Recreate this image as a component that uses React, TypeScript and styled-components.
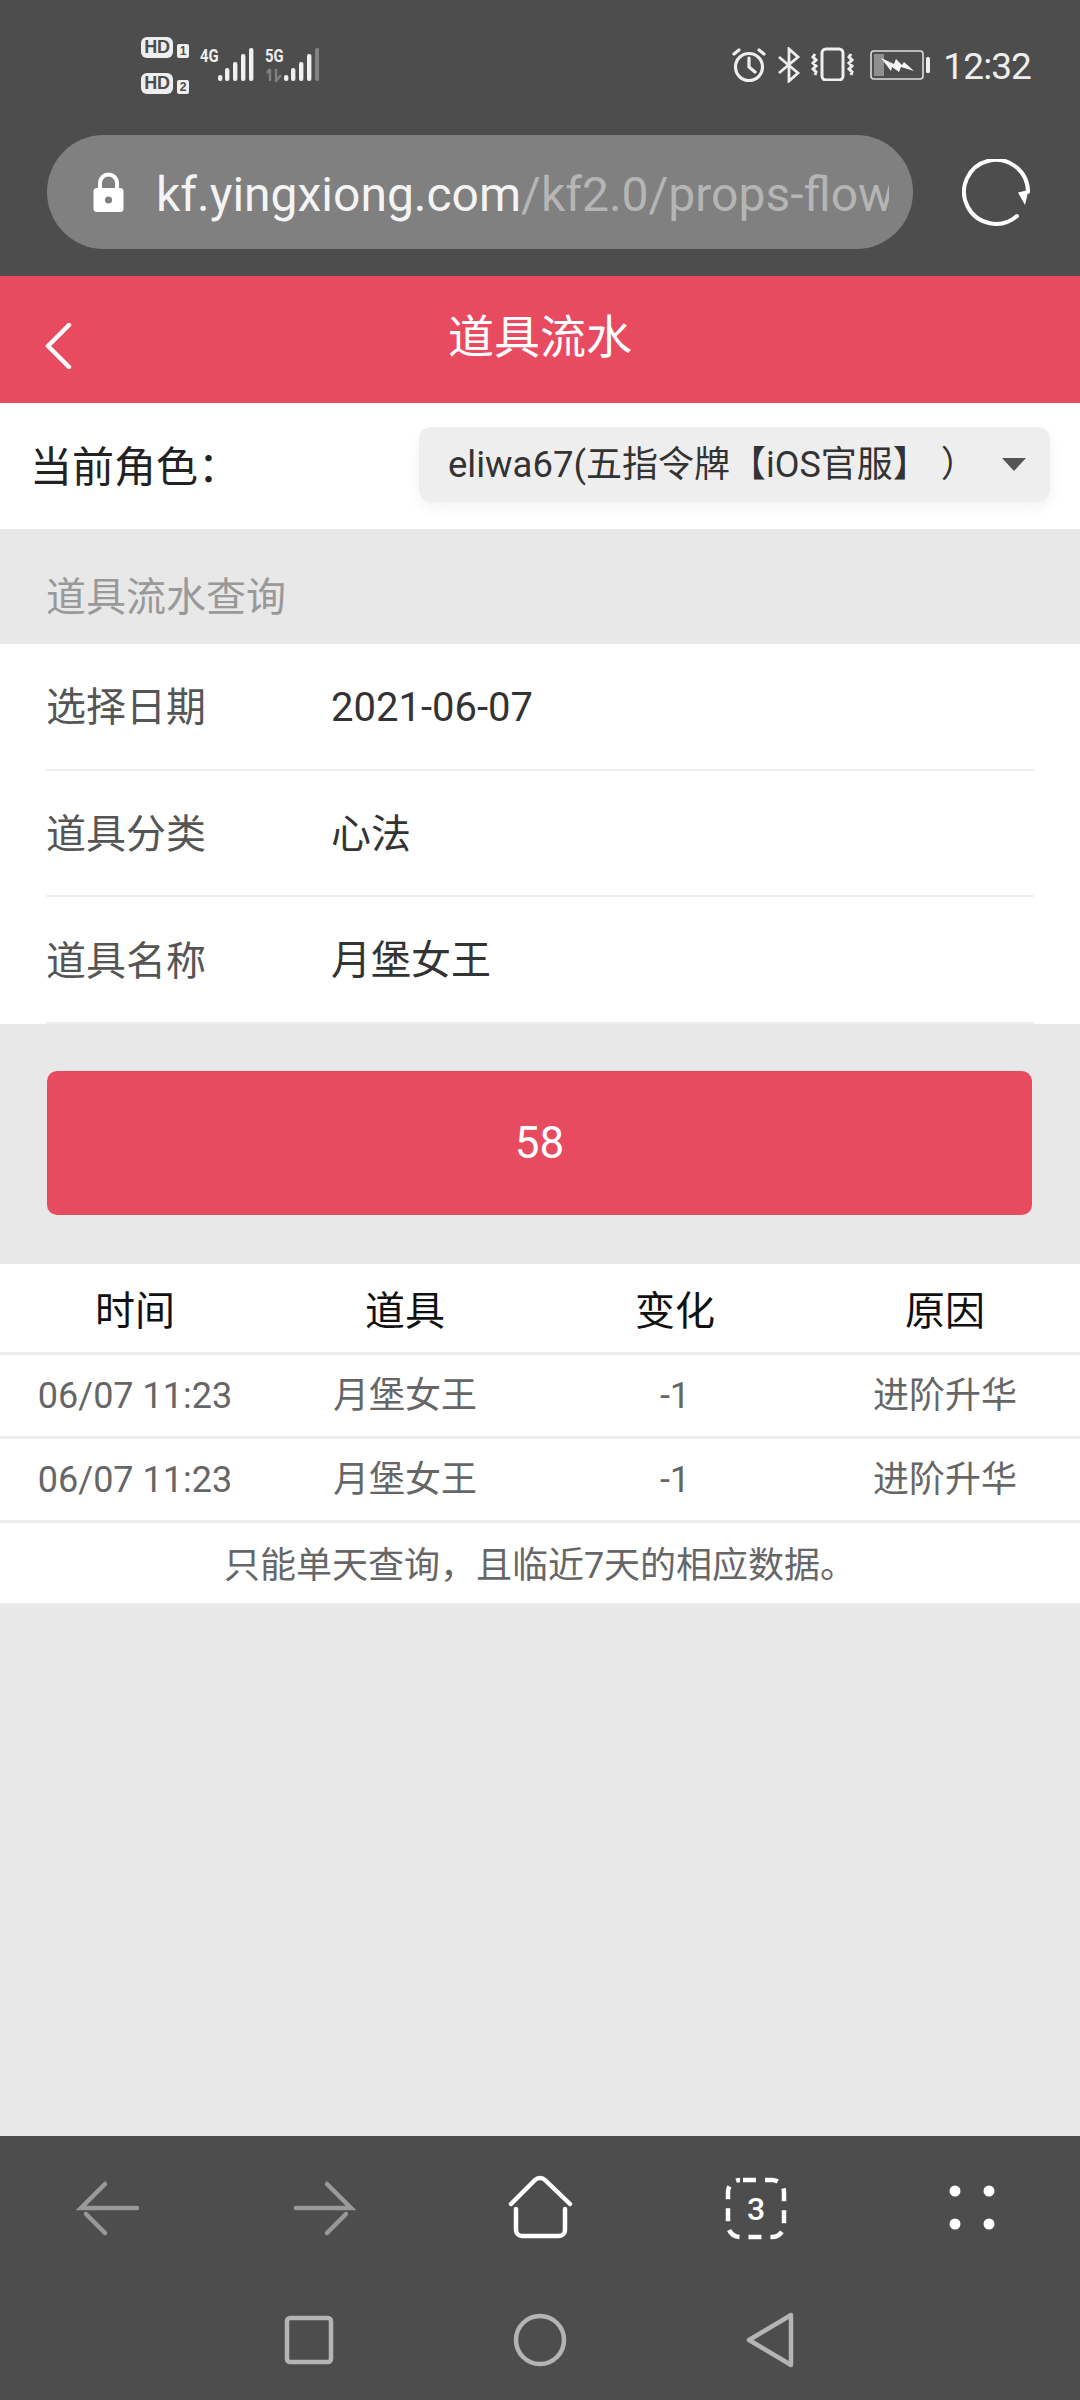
import React from "react";
import styled, { createGlobalStyle } from "styled-components";

const Global = createGlobalStyle`
  html, body { margin: 0; padding: 0; background: #e8e8e8; }
  * { box-sizing: border-box; }
  body { font-family: Roboto, "Noto Sans CJK SC", sans-serif; }
`;

const Page = styled.div`
  width: 1080px;
  height: 2400px;
  display: flex;
  flex-direction: column;
  background: #e8e8e8;
  overflow: hidden;
`;

const Chrome = styled.header`
  height: 276px;
  flex: none;
  background: #4d4d4d;
  display: flex;
  flex-direction: column;
`;

const StatusBar = styled.div`
  height: 135px;
  flex: none;
  padding: 0 49px 0 141px;
  display: flex;
  justify-content: space-between;
`;

const StatusLeft = styled.div`
  display: flex;
  padding-top: 37px;
`;

const SimStack = styled.div`
  width: 49px;
  display: flex;
  flex-direction: column;
  gap: 15px;
`;

const SimRow = styled.div`
  height: 21px;
  display: flex;
  align-items: flex-end;
  gap: 4px;
`;

const HdBadge = styled.span`
  width: 32px;
  height: 21px;
  border-radius: 6px;
  background: #eeeeee;
  color: #4d4d4d;
  font: 700 18px/21px "Liberation Sans", sans-serif;
  text-align: center;
  letter-spacing: -0.3px;
`;

const SimIndex = styled.span`
  width: 12px;
  height: 14px;
  border-radius: 2px;
  background: #eeeeee;
  color: #4d4d4d;
  font: 700 12px/14px "Liberation Sans", sans-serif;
  text-align: center;
`;

const SignalGroup = styled.div<{ $gap: number }>`
  margin-left: ${(p) => p.$gap}px;
  width: 53px;
  height: 34px;
  margin-top: 11px;
  position: relative;
`;

const NetLabel = styled.span`
  position: absolute;
  left: 0;
  top: -2px;
  color: #eeeeee;
  font: 700 19px/20px Roboto, sans-serif;
  transform: scaleX(0.78);
  transform-origin: left top;
`;

const StatusRight = styled.div`
  display: flex;
  align-items: flex-start;
  padding-top: 47px;
`;

const Clock = styled.span`
  margin-left: 13px;
  margin-top: 1px;
  color: #eeeeee;
  font: 400 37px/38px Roboto, sans-serif;
  letter-spacing: -0.9px;
`;

const UrlRow = styled.div`
  padding-left: 47px;
  display: flex;
  align-items: flex-start;
`;

const UrlPill = styled.div`
  width: 866px;
  height: 114px;
  border-radius: 57px;
  background: #808080;
  display: flex;
  align-items: center;
  padding: 0 24px 0 46px;
`;

const UrlText = styled.div`
  margin-left: 32px;
  padding-top: 5px;
  flex: 1;
  min-width: 0;
  overflow: hidden;
  white-space: nowrap;
  font: 400 48px/60px Roboto, sans-serif;
  color: #b5b5b5;
`;

const UrlHost = styled.span`
  color: #f4f4f4;
`;

const Reload = styled.svg`
  margin: 24px 0 0 49px;
  flex: none;
`;

const TitleBar = styled.div`
  height: 127px;
  flex: none;
  background: #e84b5f;
  display: grid;
  grid-template-columns: 1fr auto 1fr;
  align-items: center;
`;

const BackIcon = styled.svg`
  margin: 13px 0 0 44px;
`;

const Title = styled.h1`
  margin: 0 0 13px;
  color: #fff;
  font: 400 46px/60px "Noto Sans CJK SC", sans-serif;
`;

const RoleBar = styled.div`
  height: 126px;
  flex: none;
  background: #fff;
  display: flex;
  align-items: center;
  justify-content: space-between;
  padding: 0 30px 0 30px;
`;

const RoleLabel = styled.span`
  font: 400 42px/56px "Noto Sans CJK SC", sans-serif;
  color: #222;
  margin-top: -4px;
`;

const RoleSelect = styled.div`
  width: 631px;
  height: 75px;
  margin-top: -3px;
  border-radius: 12px;
  background: #eeeeee;
  box-shadow: 0 6px 14px rgba(0, 0, 0, 0.05);
  display: flex;
  align-items: center;
  justify-content: space-between;
  padding: 0 24px 0 29px;
  font: 400 36px/48px Roboto, "Noto Sans CJK SC", sans-serif;
  color: #333;
  white-space: nowrap;
  text-spacing-trim: space-all;
`;

const RoleName = styled.span`
  font-size: 36.5px;
`;

const RoleParen = styled.span`
  margin-left: 12px;
`;

const Caret = styled.span`
  width: 0;
  height: 0;
  border-left: 12px solid transparent;
  border-right: 12px solid transparent;
  border-top: 13px solid #555;
`;

const SectionTitle = styled.div`
  height: 115px;
  flex: none;
  padding: 15px 0 0 46px;
  display: flex;
  align-items: center;
  font: 400 40px/50px "Noto Sans CJK SC", sans-serif;
  color: #999;
`;

const Form = styled.div`
  height: 380px;
  flex: none;
  background: #fff;
  padding: 0 46px;
  display: flex;
  flex-direction: column;
`;

const FormRow = styled.div`
  flex: 1;
  display: flex;
  align-items: center;
  border-bottom: 2px solid #eeeeee;
`;

const FormLabel = styled.span`
  width: 285px;
  padding-bottom: 4px;
  font: 400 40px/50px "Noto Sans CJK SC", sans-serif;
  color: #555;
`;

const FormValue = styled.span`
  padding-top: 3px;
  font: 400 40px/50px Roboto, "Noto Sans CJK SC", sans-serif;
  color: #333;
`;

const ButtonArea = styled.div`
  height: 240px;
  flex: none;
  padding: 47px 48px 49px 47px;
`;

const SubmitButton = styled.button`
  width: 100%;
  height: 144px;
  border: 0;
  padding: 0;
  border-radius: 10px;
  background: #e84b5f;
  color: #fff;
  font: 400 44px/50px Roboto, sans-serif;
`;

const Table = styled.div`
  flex: none;
  background: #fff;
`;

const TableRow = styled.div<{ $height: number }>`
  height: ${(p) => p.$height}px;
  display: grid;
  grid-template-columns: repeat(4, 270px);
  align-items: center;
  border-bottom: 3px solid #ececec;
  text-align: center;
`;

const HeadCell = styled.div`
  font: 400 40px/50px "Noto Sans CJK SC", sans-serif;
  color: #111;
`;

const Cell = styled.div`
  font: 400 36px/46px Roboto, "Noto Sans CJK SC", sans-serif;
  color: #666;
`;

const Note = styled.div`
  height: 83px;
  padding-top: 6px;
  display: flex;
  align-items: center;
  justify-content: center;
  border-bottom: 3px solid #ececec;
  font: 400 36px/46px Roboto, "Noto Sans CJK SC", sans-serif;
  color: #666;
`;

const Spacer = styled.div`
  flex: 1;
`;

const BottomBar = styled.footer`
  height: 264px;
  flex: none;
  background: #4d4d4d;
  display: flex;
  flex-direction: column;
`;

const ToolRow = styled.div`
  display: grid;
  grid-template-columns: repeat(5, 216px);
  justify-items: center;
  padding-top: 36px;
`;

const SysRow = styled.div`
  margin-top: 67px;
  display: grid;
  grid-template-columns: repeat(3, 231px);
  justify-content: center;
  justify-items: center;
`;

const Tool = styled.svg`
  display: block;
`;

const TabsCount = styled.text`
  font: 500 32px Roboto, sans-serif;
  fill: #fff;
`;

const barSpec = [
  [18, 27],
  [25, 20],
  [33, 14],
  [41, 6],
  [49, 0],
];

const Bars = ({ dim }: { dim?: boolean }) => (
  <svg width="54" height="34" viewBox="0 0 54 34" style={{ position: "absolute", left: 0, top: 0 }}>
    {barSpec.map(([x, y], i) => (
      <rect key={i} x={x + (dim ? 1 : 0)} y={y} width="4.4" height={33 - y} rx="2" fill={dim && i === 4 ? "#828282" : "#f0f0f0"} />
    ))}
    {dim ? (
      <path d="M5 33V21M2 25l3-4M11 21v12l5-6" stroke="#808080" strokeWidth="2.4" fill="none" />
    ) : null}
  </svg>
);

export default function App() {
  return (
    <Page>
      <Global />
      <Chrome>
        <StatusBar>
          <StatusLeft>
            <SimStack>
              <SimRow>
                <HdBadge>HD</HdBadge>
                <SimIndex>1</SimIndex>
              </SimRow>
              <SimRow>
                <HdBadge>HD</HdBadge>
                <SimIndex>2</SimIndex>
              </SimRow>
            </SimStack>
            <SignalGroup $gap={10}>
              <NetLabel>4G</NetLabel>
              <Bars />
            </SignalGroup>
            <SignalGroup $gap={12}>
              <NetLabel>5G</NetLabel>
              <Bars dim />
            </SignalGroup>
          </StatusLeft>
          <StatusRight>
            <svg width="34" height="36" viewBox="0 0 34 36" fill="none" stroke="#eee" strokeWidth="3.2" strokeLinecap="round">
              <circle cx="17" cy="20" r="13.5" />
              <path d="M17 11v9l6 5M2 7l5-4M32 7l-5-4" />
            </svg>
            <svg width="24" height="36" viewBox="0 0 24 36" fill="none" stroke="#eee" strokeWidth="2.8" style={{ marginLeft: 11 }}>
              <path d="M2 10l19 16-9 8V2l9 8L2 26" />
            </svg>
            <svg width="44" height="34" viewBox="0 0 44 34" fill="none" stroke="#eee" strokeWidth="3" style={{ marginLeft: 10 }}>
              <rect x="11" y="2" width="21" height="31" rx="4" />
              <path d="M4 7L2 10l3 3-3 3 3 3-3 3 3 3-1 3M40 7l-2 3 3 3-3 3 3 3-3 3 3 3-1 3" />
            </svg>
            <svg width="60" height="30" viewBox="0 0 60 30" style={{ marginLeft: 15, marginTop: 3 }}>
              <rect x="1" y="1" width="52" height="28" rx="3" fill="none" stroke="#ddd" strokeWidth="1.6" />
              <rect x="4" y="4" width="10" height="22" fill="#8f8f8f" />
              <rect x="56" y="7" width="4" height="16" rx="1.5" fill="#eee" />
              <path d="M11 8l13 6 2-5 6 6 2-3 10 9-13-4-2 5-7-5-1 4z" fill="#f6f6f6" />
            </svg>
            <Clock>12:32</Clock>
          </StatusRight>
        </StatusBar>
        <UrlRow>
          <UrlPill>
            <svg width="31" height="40" viewBox="0 0 31 40">
              <path d="M7 18v-7a8.5 8.5 0 0 1 17 0v7" fill="none" stroke="#fff" strokeWidth="4" />
              <rect x="0.5" y="16" width="30" height="24" rx="3.5" fill="#fff" />
              <circle cx="15.5" cy="28" r="3.6" fill="#808080" />
            </svg>
            <UrlText>
              <UrlHost>kf.yingxiong.com</UrlHost>/kf2.0/props-flow
            </UrlText>
          </UrlPill>
          <Reload width="68" height="68" viewBox="0 0 68 68" fill="none">
            <path d="M55 57A32 32 0 1 1 66 33" stroke="#fff" strokeWidth="4" strokeLinecap="round" />
            <path d="M56 33.5l10.5-2.5L63 46z" fill="#fff" />
          </Reload>
        </UrlRow>
      </Chrome>

      <TitleBar>
        <BackIcon width="30" height="46" viewBox="0 0 30 46" fill="none">
          <path d="M25 2L4 23l21 21" stroke="#fff" strokeWidth="4.5" strokeLinecap="round" strokeLinejoin="round" />
        </BackIcon>
        <Title>道具流水</Title>
        <span />
      </TitleBar>

      <RoleBar>
        <RoleLabel>当前角色：</RoleLabel>
        <RoleSelect>
          <span>
            <RoleName>eliwa67(</RoleName>五指令牌【iOS官服】<RoleParen>）</RoleParen>
          </span>
          <Caret />
        </RoleSelect>
      </RoleBar>

      <SectionTitle>道具流水查询</SectionTitle>

      <Form>
        <FormRow>
          <FormLabel>选择日期</FormLabel>
          <FormValue>2021-06-07</FormValue>
        </FormRow>
        <FormRow>
          <FormLabel>道具分类</FormLabel>
          <FormValue>心法</FormValue>
        </FormRow>
        <FormRow>
          <FormLabel>道具名称</FormLabel>
          <FormValue>月堡女王</FormValue>
        </FormRow>
      </Form>

      <ButtonArea>
        <SubmitButton>58</SubmitButton>
      </ButtonArea>

      <Table>
        <TableRow $height={91}>
          <HeadCell>时间</HeadCell>
          <HeadCell>道具</HeadCell>
          <HeadCell>变化</HeadCell>
          <HeadCell>原因</HeadCell>
        </TableRow>
        {[0, 1].map((i) => (
          <TableRow key={i} $height={84}>
            <Cell>06/07 11:23</Cell>
            <Cell>月堡女王</Cell>
            <Cell>-1</Cell>
            <Cell>进阶升华</Cell>
          </TableRow>
        ))}
        <Note>只能单天查询，且临近7天的相应数据。</Note>
      </Table>

      <Spacer />

      <BottomBar>
        <ToolRow>
          <Tool width="72" height="72" viewBox="0 0 72 72" fill="none" stroke="#999" strokeWidth="4.5" strokeLinecap="round">
            <path d="M33 12L9 36h56M14 42l19 19" />
          </Tool>
          <Tool width="72" height="72" viewBox="0 0 72 72" fill="none" stroke="#999" strokeWidth="4.5" strokeLinecap="round">
            <path d="M39 12l24 24H8M58 42L39 61" />
          </Tool>
          <Tool width="72" height="72" viewBox="0 0 72 72" fill="none" stroke="#fff" strokeWidth="4.5" strokeLinecap="round">
            <path d="M7 32L31 8a7 7 0 0 1 10 0L66 32M12 37v21a6 6 0 0 0 6 6h37a6 6 0 0 0 6-6V37" />
          </Tool>
          <Tool width="72" height="72" viewBox="0 0 72 72" fill="none" stroke="#fff" strokeWidth="4.5">
            <rect x="8" y="8" width="56" height="57" rx="12" strokeDasharray="13 9" strokeDashoffset="-3" />
            <TabsCount x="36" y="48" textAnchor="middle" stroke="none">3</TabsCount>
          </Tool>
          <Tool width="72" height="72" viewBox="0 0 72 72" fill="#fff">
            <circle cx="19" cy="19" r="5.5" />
            <circle cx="53" cy="19" r="5.5" />
            <circle cx="19" cy="52" r="5.5" />
            <circle cx="53" cy="52" r="5.5" />
          </Tool>
        </ToolRow>
        <SysRow>
          <Tool width="60" height="60" viewBox="0 0 60 60" fill="none" stroke="#b4b4b4" strokeWidth="4.5">
            <rect x="8" y="7" width="44" height="44" rx="3" />
          </Tool>
          <Tool width="60" height="60" viewBox="0 0 60 60" fill="none" stroke="#b4b4b4" strokeWidth="4.5">
            <circle cx="30" cy="29" r="24" />
          </Tool>
          <Tool width="60" height="60" viewBox="0 0 60 60" fill="none" stroke="#b4b4b4" strokeWidth="4.5" strokeLinejoin="round">
            <path d="M8 29L50 4v50z" />
          </Tool>
        </SysRow>
      </BottomBar>
    </Page>
  );
}
